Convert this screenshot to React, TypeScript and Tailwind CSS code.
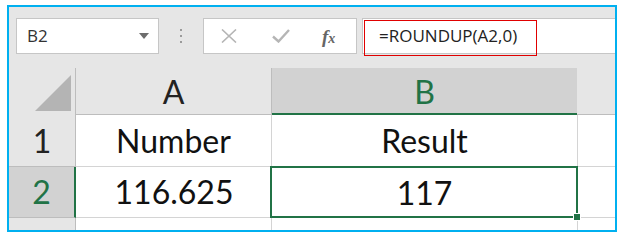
import React from "react";

const cellFont = "font-['Lato','Liberation_Sans',sans-serif]";
const uiFont = "font-['Open_Sans','Noto_Sans',sans-serif]";

function Corner() {
  return (
    <div className="relative h-full border-r border-[#bdbdbd] bg-[#e6e6e6]">
      <svg className="absolute left-[26px] top-[7px]" width="36" height="36" viewBox="0 0 36 36">
        <polygon points="36,0 36,36 0,36" fill="#b4b4b4" />
      </svg>
    </div>
  );
}

function SelectionBox() {
  return (
    <div className="pointer-events-none absolute -left-[2px] -top-[1px] -right-[1px] bottom-0 border-2 border-[#217346]">
      <div className="absolute -bottom-[4px] -right-[4px] h-[6px] w-[6px] bg-[#217346] outline outline-1 outline-white" />
    </div>
  );
}

export default function App() {
  return (
    <div className="min-h-[240px] bg-white pl-[7px] pt-[5px]">
      <div className="relative h-[227px] w-[610px] overflow-hidden border-2 border-[#00b0f0] bg-[#e6e6e6]">
        {/* formula toolbar */}
        <div className={`flex items-stretch pt-[11px] pl-[7px] h-[47px] ${uiFont}`}>
          <div className="flex w-[143px] items-center justify-between border border-[#c6c6c6] bg-white pl-[10px] pr-[9px]">
            <span className="text-[17px] text-[#333]">B2</span>
            <svg width="10" height="6" viewBox="0 0 10 6">
              <polygon points="0,0 10,0 5,6" fill="#6d6d6d" />
            </svg>
          </div>
          <div className="flex w-[44px] flex-col items-center justify-center gap-[4px]">
            <div className="h-[2px] w-[2px] bg-[#9a9a9a]" />
            <div className="h-[2px] w-[2px] bg-[#9a9a9a]" />
            <div className="h-[2px] w-[2px] bg-[#9a9a9a]" />
          </div>
          <div className="flex w-[154px] items-center border border-[#c6c6c6] bg-white">
            <svg className="ml-[17px]" width="16" height="14" viewBox="0 0 16 14">
              <path d="M1 0.5 L15 13.5 M15 0.5 L1 13.5" stroke="#b5b5b5" strokeWidth="1.6" fill="none" />
            </svg>
            <svg className="ml-[35px]" width="18" height="14" viewBox="0 0 18 14">
              <path d="M1 7.5 L6.5 12.5 L17 1" stroke="#b5b5b5" strokeWidth="2.4" fill="none" />
            </svg>
            <span className="ml-[32px] font-['Liberation_Serif',serif] text-[19px] italic font-bold text-[#666] leading-none">
              f<span className="text-[14px]">x</span>
            </span>
          </div>
          <div className="relative ml-[5px] flex flex-1 items-center border-y border-l border-[#c6c6c6] bg-white pl-[16px]">
            <span className="text-[17px] text-[#222]">=ROUNDUP(A2,0)</span>
            <div className="pointer-events-none absolute left-[1px] top-[1px] h-[36px] w-[173px] border border-[#e00000]" />
          </div>
        </div>

        {/* sheet */}
        <div
          className={`mt-[14px] grid grid-cols-[67px_196px_305px_1fr] grid-rows-[47px_52px_51px_20px] text-[32px] text-[#111] ${cellFont}`}
        >
          <Corner />
          <div className="flex items-center justify-center border-r border-b border-[#bdbdbd] bg-[#e6e6e6] pt-[2px] text-[#222]">
            A
          </div>
          <div className="flex items-center justify-center border-b-2 border-[#217346] bg-[#d2d2d2] pt-[2px] text-[#217346]">
            B
          </div>
          <div className="border-b border-[#bdbdbd] bg-[#e6e6e6]" />

          <div className="flex items-center justify-center border-r border-b border-[#bdbdbd] bg-[#e6e6e6] text-[#222]">
            1
          </div>
          <div className="flex items-center justify-center border-r border-b border-[#d4d4d4] bg-white">Number</div>
          <div className="flex items-center justify-center border-b border-[#d4d4d4] bg-white">Result</div>
          <div className="border-l border-b border-[#d4d4d4] bg-white" />

          <div className="flex items-center justify-center border-r-2 border-b border-r-[#217346] border-b-[#bdbdbd] bg-[#d2d2d2] text-[#217346]">
            2
          </div>
          <div className="flex items-center justify-center border-b border-[#d4d4d4] bg-white">116.625</div>
          <div className="relative flex items-center justify-center bg-white">
            117
            <SelectionBox />
          </div>
          <div className="border-l border-b border-[#d4d4d4] bg-white" />

          <div className="border-r border-[#bdbdbd] bg-[#e6e6e6]" />
          <div className="border-r border-[#d4d4d4] bg-white" />
          <div className="bg-white" />
          <div className="border-l border-[#d4d4d4] bg-white" />
        </div>
      </div>
    </div>
  );
}
